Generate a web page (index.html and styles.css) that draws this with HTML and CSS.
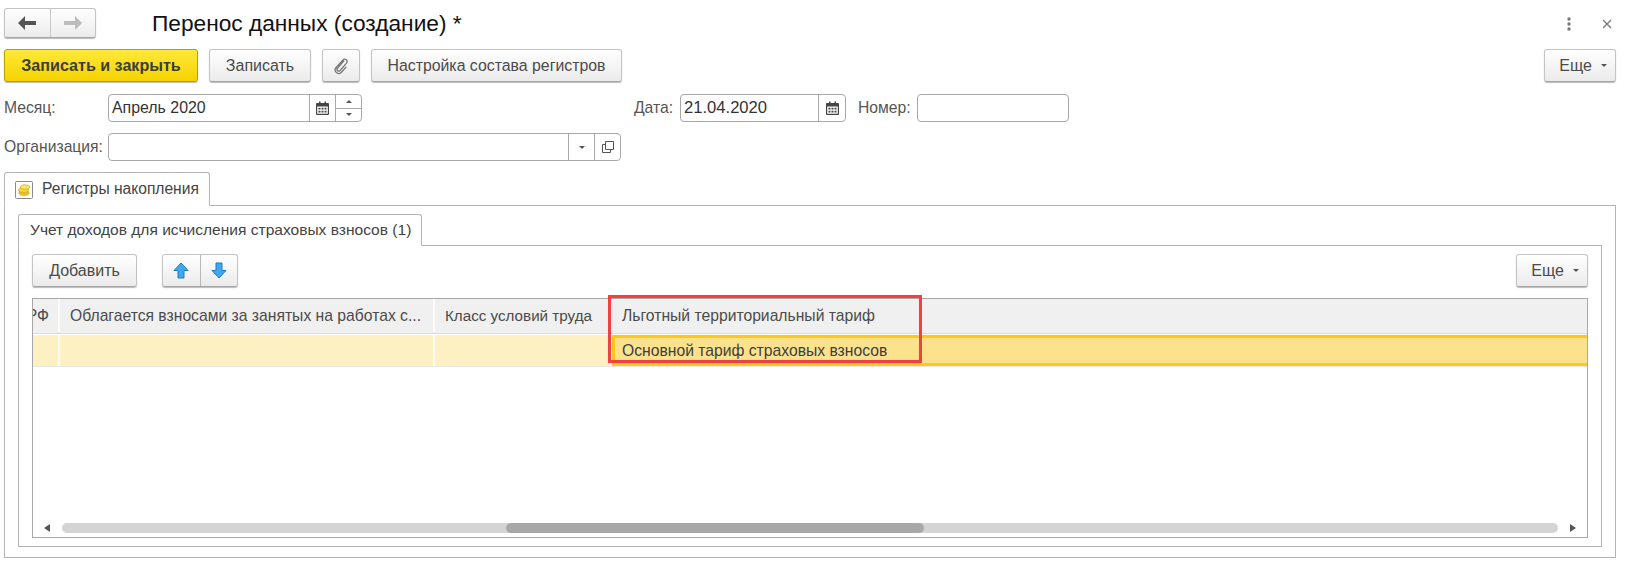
FILE: index.html
```html
<!DOCTYPE html>
<html lang="ru">
<head>
  <meta charset="UTF-8" />
  <title>Перенос данных (создание)</title>
  <link rel="stylesheet" href="styles.css">
</head>
<body>

  <!-- Title bar -->
  <header class="head">
    <div class="nav">
      <span class="nav-cell">
        <svg width="18" height="14" viewBox="0 0 18 14"><path d="M0 7 L7 0 V5 H18 V9 H7 V14 Z" fill="#555"/></svg>
      </span>
      <span class="nav-cell">
        <svg width="18" height="14" viewBox="0 0 18 14"><path d="M18 7 L11 0 V5 H0 V9 H11 V14 Z" fill="#bcbcbc"/></svg>
      </span>
    </div>
    <h1>Перенос данных (создание) *</h1>
    <div class="win-tools">
      <svg width="6" height="14" viewBox="0 0 6 14"><circle cx="3" cy="2" r="1.7"/><circle cx="3" cy="7" r="1.7"/><circle cx="3" cy="12" r="1.7"/></svg>
      <svg class="win-close" width="10" height="10" viewBox="0 0 10 10"><path d="M1 1 L9 9 M9 1 L1 9"/></svg>
    </div>
  </header>

  <!-- Command bar -->
  <div class="toolbar">
    <button class="btn btn-main">Записать и закрыть</button>
    <button class="btn btn-save">Записать</button>
    <button class="btn btn-clip">
      <svg width="16" height="18" viewBox="0 0 18 20"><path d="M12.5 4 L5 12.5 C3.5 14.5 6 17 8 15 L15 7 C17.5 4 13.5 0.5 11 3.5 L3.5 11.5 C0 16 6 21 9.5 17 L15 11"/></svg>
    </button>
    <button class="btn btn-setup">Настройка состава регистров</button>
    <button class="btn btn-more">Еще<i class="caret"></i></button>
  </div>

  <!-- Form fields -->
  <div class="form-row">
    <label class="lbl lbl-main">Месяц:</label>
    <div class="field field-month">
      <span class="field-text">Апрель 2020</span>
      <span class="field-btn">
        <svg class="cal" width="13" height="14" viewBox="0 0 13 14"><path d="M1 2 H3 V0.5 H4.5 V2 H8.5 V0.5 H10 V2 H12 Q13 2 13 3 V13 Q13 14 12 14 H1 Q0 14 0 13 V3 Q0 2 1 2 Z M1.2 5.5 V12.8 H11.8 V5.5 Z M2.5 6.8 H4.5 V8.6 H2.5 Z M5.5 6.8 H7.5 V8.6 H5.5 Z M8.5 6.8 H10.5 V8.6 H8.5 Z M2.5 9.8 H4.5 V11.6 H2.5 Z M5.5 9.8 H7.5 V11.6 H5.5 Z M8.5 9.8 H10.5 V11.6 H8.5 Z" fill-rule="evenodd"/></svg>
      </span>
      <span class="spin">
        <span class="spin-cell"><i class="tri tri-up"></i></span>
        <span class="spin-cell"><i class="tri tri-down"></i></span>
      </span>
    </div>
    <label class="lbl lbl-date">Дата:</label>
    <div class="field field-date">
      <span class="field-text">21.04.2020</span>
      <span class="field-btn field-btn-date">
        <svg class="cal" width="13" height="14" viewBox="0 0 13 14"><path d="M1 2 H3 V0.5 H4.5 V2 H8.5 V0.5 H10 V2 H12 Q13 2 13 3 V13 Q13 14 12 14 H1 Q0 14 0 13 V3 Q0 2 1 2 Z M1.2 5.5 V12.8 H11.8 V5.5 Z M2.5 6.8 H4.5 V8.6 H2.5 Z M5.5 6.8 H7.5 V8.6 H5.5 Z M8.5 6.8 H10.5 V8.6 H8.5 Z M2.5 9.8 H4.5 V11.6 H2.5 Z M5.5 9.8 H7.5 V11.6 H5.5 Z M8.5 9.8 H10.5 V11.6 H8.5 Z" fill-rule="evenodd"/></svg>
      </span>
    </div>
    <label class="lbl lbl-num">Номер:</label>
    <div class="field field-num"></div>
  </div>

  <div class="form-row form-row-org">
    <label class="lbl lbl-main">Организация:</label>
    <div class="field field-org">
      <span class="field-text"></span>
      <span class="field-btn field-btn-drop"><i class="caret"></i></span>
      <span class="field-btn field-btn-open">
        <svg width="12" height="12" viewBox="0 0 12 12"><path d="M3.5 0.5 H11.5 V8.5 H3.5 Z M3.5 3.5 H0.5 V11.5 H8.5 V8.5"/></svg>
      </span>
    </div>
  </div>

  <!-- Outer tabs -->
  <div class="tabs">
    <div class="tab tab-outer">
      <svg class="tab-icon" width="18" height="18" viewBox="0 0 18 18">
        <rect x="0.5" y="0.5" width="17" height="17" rx="1" fill="#fff" stroke="#8a8a8a"/>
        <ellipse cx="9" cy="12" rx="5" ry="2.4" fill="#f0c21c" stroke="#c49a10" stroke-width="0.6"/>
        <ellipse cx="8.5" cy="9" rx="5" ry="2.4" fill="#f8d93a" stroke="#c49a10" stroke-width="0.6"/>
        <ellipse cx="10" cy="6" rx="4.5" ry="2.2" fill="#fbe860" stroke="#c49a10" stroke-width="0.6"/>
      </svg>
      Регистры накопления
    </div>
  </div>
  <section class="pane pane-outer">

    <!-- Inner tabs -->
    <div class="tabs">
      <div class="tab tab-inner">Учет доходов для исчисления страховых взносов (1)</div>
    </div>
    <div class="pane pane-inner">
      <div class="table-bar">
        <button class="btn btn-add">Добавить</button>
        <div class="btn arrows">
          <span class="arrow-cell">
            <svg width="16" height="17" viewBox="0 0 16 17"><path d="M8 1 L15 8.5 H11 V16 H5 V8.5 H1 Z"/></svg>
          </span>
          <span class="arrow-cell">
            <svg width="16" height="17" viewBox="0 0 16 17"><path d="M8 16 L15 8.5 H11 V1 H5 V8.5 H1 Z"/></svg>
          </span>
        </div>
        <button class="btn btn-more">Еще<i class="caret"></i></button>
      </div>

      <div class="grid">
        <div class="grid-row grid-head">
          <div class="cell col-rf">РФ</div>
          <div class="cell col-work">Облагается взносами за занятых на работах с...</div>
          <div class="cell col-class">Класс условий труда</div>
          <div class="cell col-rate">Льготный территориальный тариф</div>
          <div class="cell col-rest"></div>
        </div>
        <div class="grid-row grid-data">
          <div class="cell col-rf"></div>
          <div class="cell col-work"></div>
          <div class="cell col-class"></div>
          <div class="cell cell-active">Основной тариф страховых взносов</div>
        </div>

        <div class="hscroll">
          <i class="tri tri-left"></i>
          <div class="hscroll-track"><div class="hscroll-thumb"></div></div>
          <i class="tri tri-right"></i>
        </div>

        <!-- Red callout over the column -->
        <div class="callout"></div>
      </div>
    </div>
  </section>

</body>
</html>
```

FILE: styles.css
```css
:root {
  --line: #a8a8a8;
  --text: #4b4b4b;
}
* { box-sizing: border-box; }
body {
  margin: 0;
  padding: 8px 16px 0 4px;
  height: 565px;
  overflow: hidden;
  background: #fff;
  color: var(--text);
  font-family: 'Liberation Sans', Arial, sans-serif;
  font-size: 15.7px;
}

/* Title bar */
.head {
  display: flex;
  align-items: center;
  height: 30px;
  margin-bottom: 11px;
}
.head h1 {
  margin: 0 0 0 56px;
  font-size: 22.7px;
  font-weight: 400;
  color: #111;
}
.nav {
  display: flex;
  width: 92px;
  height: 30px;
  border: 1px solid #c4c4c4;
  border-bottom-color: #a6a6a6;
  border-radius: 3px;
  background: linear-gradient(#fff, #ececec);
  box-shadow: 0 1px 1px #bbb;
}
.nav-cell {
  flex: 1;
  display: flex;
  align-items: center;
  justify-content: center;
}
.nav-cell + .nav-cell { border-left: 1px solid #c8c8c8; }
.win-tools {
  display: flex;
  align-items: center;
  gap: 30px;
  margin-left: auto;
  margin-right: 4px;
  padding-top: 2px;
}
.win-tools svg { fill: #777; }
.win-close { stroke: #777; stroke-width: 1.3; fill: none; }

/* Buttons */
.btn {
  display: flex;
  align-items: center;
  justify-content: center;
  height: 33px;
  padding: 0;
  border: 1px solid #c4c4c4;
  border-bottom-color: #a6a6a6;
  border-radius: 3px;
  background: linear-gradient(#fff, #ebebeb);
  box-shadow: 0 1px 1px #bbb;
  color: var(--text);
  font-family: inherit;
  font-size: 16px;
}
.toolbar {
  display: flex;
  height: 33px;
  margin-bottom: 12px;
}
.btn-main {
  width: 194px;
  border-color: #b8a000;
  background: linear-gradient(#ffe93a, #f5d300);
  color: #3d3d3d;
  font-size: 16.1px;
  font-weight: 700;
}
.btn-save { width: 102px; margin-left: 11px; }
.btn-clip { width: 38px; margin-left: 11px; }
.btn-clip svg { fill: none; stroke: #777; stroke-width: 1.5; }
.btn-setup { width: 251px; margin-left: 11px; font-size: 15.85px; }
.btn-more { width: 72px; margin-left: auto; padding-left: 6px; }
.caret {
  width: 0;
  height: 0;
  border-left: 3px solid transparent;
  border-right: 3px solid transparent;
  border-top: 3px solid #555;
}
.btn-more .caret { margin-left: 9px; }

/* Form */
.form-row {
  display: flex;
  align-items: center;
  height: 28px;
  margin-bottom: 11px;
}
.lbl { color: #555; }
.lbl-main { width: 104px; }
.lbl-date { width: 46px; margin-left: 272px; }
.lbl-num { width: 59px; margin-left: 12px; }
.field {
  display: flex;
  height: 28px;
  border: 1px solid var(--line);
  border-radius: 4px;
  background: #fff;
}
.field-month { width: 254px; }
.field-date { width: 166px; }
.field-num { width: 152px; }
.field-org { width: 513px; }
.field-text {
  flex: 1;
  padding-left: 3px;
  font-size: 15.9px;
  line-height: 25px;
  color: #333;
}
.field-date .field-text { font-size: 16.6px; }
.field-btn {
  display: flex;
  align-items: center;
  justify-content: center;
  width: 26px;
  border-left: 1px solid var(--line);
}
.field-btn-date { width: 27px; }
.cal { fill: #444; }
.field-btn-open svg { fill: none; stroke: #555; }
.spin {
  display: flex;
  flex-direction: column;
  width: 26px;
  border-left: 1px solid var(--line);
}
.spin-cell {
  flex: 1;
  display: flex;
  align-items: center;
  justify-content: center;
}
.spin-cell + .spin-cell { border-top: 1px solid var(--line); }
.tri { width: 0; height: 0; border-style: solid; border-color: transparent; }
.tri-up { border-width: 0 3px 3px; border-bottom-color: #555; }
.tri-down { border-width: 3px 3px 0; border-top-color: #555; }
.tri-left { border-width: 4px 6px 4px 0; border-right-color: #555; }
.tri-right { border-width: 4px 0 4px 6px; border-left-color: #555; }

/* Tabs and panes */
.tabs { display: flex; position: relative; z-index: 1; }
.tab {
  display: flex;
  align-items: center;
  margin-bottom: -1px;
  border: 1px solid #b4b4b4;
  border-bottom-color: #fff;
  border-radius: 3px 3px 0 0;
  background: #fff;
  color: #444;
}
.tab-outer {
  width: 206px;
  height: 34px;
  padding-left: 10px;
  gap: 9px;
  font-size: 15.6px;
}
.tab-icon { flex: none; margin-top: 1px; }
.tab-inner {
  width: 404px;
  height: 32px;
  padding-left: 11px;
  font-size: 15.55px;
}
.pane { border: 1px solid #b4b4b4; background: #fff; }
.pane-outer { height: 353px; padding: 8px 13px 0; }
.pane-inner { height: 302px; padding: 8px 13px 0; }

.table-bar {
  display: flex;
  height: 33px;
  margin-bottom: 11px;
}
.btn-add { width: 105px; }
.arrows { width: 76px; margin-left: 25px; }
.arrow-cell {
  flex: 1;
  height: 100%;
  display: flex;
  align-items: center;
  justify-content: center;
}
.arrow-cell + .arrow-cell { border-left: 1px solid #b8b8b8; }
.arrow-cell svg { fill: #3fa9ee; stroke: #1c7cbf; }

/* Grid */
.grid {
  position: relative;
  display: flex;
  flex-direction: column;
  height: 240px;
  border: 1px solid var(--line);
}
.grid-row { display: flex; }
.grid-head {
  height: 34px;
  margin-bottom: 2px;
  padding-bottom: 1px;
  background: #f0f0f0;
  box-shadow: 0 1px 0 #dcdcdc;
}
.grid-data {
  height: 31px;
  background: #fdf0c2;
  box-shadow: 0 1px 0 #e6e6e6;
}
.cell {
  display: flex;
  align-items: center;
  overflow: hidden;
  padding-left: 10px;
  border-right: 2px solid rgba(255, 255, 255, 0.8);
  white-space: nowrap;
}
.col-rf {
  width: 27px;
  padding: 0 9px 0 0;
  justify-content: flex-end;
}
.col-work { width: 375px; }
.col-class { width: 176px; font-size: 15.2px; }
.col-rate { width: 310px; padding-left: 11px; }
.col-rest { flex: 1; border-right: 0; }
.cell-active {
  flex: 1;
  margin-left: 1px;
  padding-left: 7px;
  border: 3px solid #fcc81c;
  border-right: 0;
  background: #fde28c;
  color: #3d3d3d;
}

/* Horizontal scroll */
.hscroll {
  display: flex;
  align-items: center;
  height: 10px;
  margin-top: auto;
  margin-bottom: 4px;
  padding: 0 11px 0 11px;
}
.hscroll-track {
  flex: 1;
  height: 10px;
  margin: 0 12px;
  border-radius: 5px;
  background: #d4d4d4;
}
.hscroll-thumb {
  width: 418px;
  height: 10px;
  margin-left: 444px;
  border-radius: 5px;
  background: #a8a8a8;
}

.callout {
  position: absolute;
  left: 575px;
  top: -4px;
  width: 314px;
  height: 68px;
  border: 3px solid #f23f3f;
}
```
